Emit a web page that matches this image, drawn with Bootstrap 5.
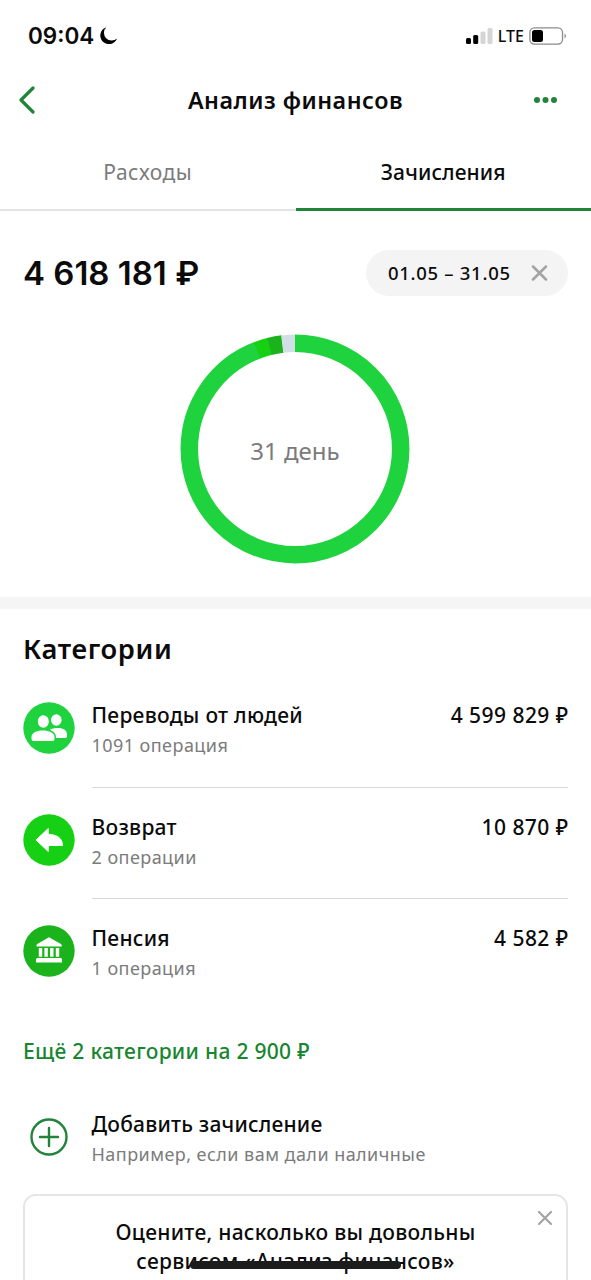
<!DOCTYPE html>
<html lang="ru">
<head>
<meta charset="utf-8">
<meta name="viewport" content="width=device-width, initial-scale=1">
<title>Анализ финансов</title>
<link href="https://cdn.jsdelivr.net/npm/bootstrap@5.3.0/dist/css/bootstrap.min.css" rel="stylesheet">
<style>
body{font-family:"Noto Sans","Open Sans",sans-serif;color:#0b0b0b;background:#fff;height:1280px;overflow:hidden;font-weight:500}
.green{color:#17862f}
.grey{color:#7b7b7b;font-weight:400}
.status{height:71px;padding:1px 24px 0 28px}
.clock{font:600 22.5px/1 Inter,sans-serif}
.lte{font-size:16px;margin:0 5px}
.topbar{height:58px;padding:0 33px 0 18px}
.side{width:60px}
.side-end{width:45px}
.heading{font-size:23.3px;font-weight:600;line-height:32px;letter-spacing:.5px}
.tabs{height:82px}
.tab-item{border-bottom:2px solid #e4e4e4;font-size:21px;line-height:30px;padding-top:28px;letter-spacing:.1px}
.tab-item.grey{letter-spacing:.5px}
.tab-item.current{border-bottom:3px solid #21843a}
.summary{height:122px;padding:39px 23px 0}
.total{font:600 33px/46px Inter,sans-serif}
.period{width:202px;height:46px;background:#f4f4f4;padding:0 20px 0 22px;font-size:18.5px;letter-spacing:.7px}
.ring{height:264px;padding:.5px 1px 0 0}
.days{font-size:24px;fill:#7b7b7b;font-weight:400}
.band{height:12px;background:#f5f5f5}
.section-title{font:600 27.3px/36px "Noto Sans",sans-serif;letter-spacing:.6px;height:67px;padding:22px 23px 0}
.entry{height:111.5px;padding:0 23px 0 22.5px}
.entry-text{margin-left:17px;border-bottom:1px solid #d9d9d9;padding-top:24px}
.entry:last-child .entry-text{border-color:transparent}
.name{font-size:21px;line-height:30px;letter-spacing:.27px}
.sum{letter-spacing:.45px;margin-right:-.5px}
.note{font-size:18px;line-height:30px;letter-spacing:.45px}
.icon{margin-top:26px}
.more{height:74px;padding:25px 23px 0;font-size:21px;line-height:30px;letter-spacing:.3px}
.add{height:109px}
.add .name{letter-spacing:.2px}
.survey{height:110px;margin:0 23px;border:2px solid #e5e5e5;border-radius:13px;font-size:21px;line-height:29.500px;padding-top:22px;letter-spacing:.28px}
.close-x{right:13px;top:14px}
.home-bar{left:190px;top:1260.500px;width:211px;height:8px;border-radius:4px;background:#1c1c1c}
</style>
</head>
<body class="position-relative">
<header>
  <div class="status d-flex align-items-center justify-content-between">
    <div class="d-flex align-items-center">
      <span class="clock">09:04</span>
      <svg class="ms-1" width="20" height="20" viewBox="0 0 20 20"><path d="M8.300 1.300A8.600 8.600 0 1 0 19 12.400 7.500 7.500 0 0 1 8.300 1.300Z"/></svg>
    </div>
    <div class="d-flex align-items-center">
      <svg width="27" height="18" viewBox="0 0 27 18"><rect x="0" y="11" width="5" height="6" rx="1.500"/><rect x="7.200" y="8" width="5" height="9" rx="1.500"/><g fill="#d5d5d5"><rect x="14.500" y="4.500" width="5" height="12.500" rx="1.500"/><rect x="21.500" y="1" width="5" height="16" rx="1.500"/></g></svg>
      <span class="lte">LTE</span>
      <svg width="38" height="18" viewBox="0 0 38 18"><rect x=".9" y=".9" width="32.600" height="16.200" rx="4.500" fill="#fff" stroke="#8b8b8b" stroke-width="1.300"/><rect x="3" y="3" width="11" height="12" rx="2.500"/><path d="M35.500 6.500q3 2.500 0 5Z" fill="#8b8b8b"/></svg>
    </div>
  </div>
  <div class="topbar d-flex align-items-center justify-content-between">
    <div class="side"><svg class="d-block" width="18" height="28" viewBox="0 0 18 28" fill="none" stroke="#21843a" stroke-width="3.200" stroke-linecap="round" stroke-linejoin="round"><path d="M15 2 3 14 15 26"/></svg></div>
    <span class="heading">Анализ финансов</span>
    <div class="side-end d-flex justify-content-end"><svg width="25" height="8" viewBox="0 0 25 8" fill="#21843a"><circle cx="4" cy="4" r="3"/><circle cx="12.500" cy="4" r="3"/><circle cx="21" cy="4" r="3"/></svg></div>
  </div>
  <nav class="tabs row g-0 text-center">
    <div class="col tab-item grey">Расходы</div>
    <div class="col tab-item current">Зачисления</div>
  </nav>
</header>
<main>
  <div class="summary d-flex justify-content-between align-items-start">
    <span class="total">4 618 181 ₽</span>
    <div class="period rounded-pill d-flex align-items-center justify-content-between">
      <span>01.05 – 31.05</span>
      <svg width="17" height="17" viewBox="0 0 17 17" stroke="#a3a3a3" stroke-width="2.500" stroke-linecap="round"><path d="m2 1.500 13 13M15 1.500 2 14.500"/></svg>
    </div>
  </div>
  <div class="ring d-flex justify-content-center">
    <svg width="230" height="230" viewBox="-115 -115 230 230">
      <g fill="none" stroke-width="17.500" transform="rotate(-90)">
        <circle r="105.700" stroke="#1fd33f" pathLength="360" stroke-dasharray="339.500 20.500"/>
        <circle r="105.700" stroke="#16d113" pathLength="360" stroke-dasharray="7.300 352.700" stroke-dashoffset="21"/>
        <circle r="105.700" stroke="#1bb31c" pathLength="360" stroke-dasharray="7.200 352.800" stroke-dashoffset="14"/>
        <circle r="105.700" stroke="#d3dfe7" pathLength="360" stroke-dasharray="7 353" stroke-dashoffset="7"/>
      </g>
      <text class="days" y="11" text-anchor="middle">31 день</text>
    </svg>
  </div>
  <div class="band"></div>
  <h2 class="section-title mb-0">Категории</h2>
  <section>
    <div class="entry d-flex">
      <svg class="icon" width="52" height="52" viewBox="0 0 52 52"><circle cx="26" cy="26" r="25.700" fill="#1fd33f"/><g fill="#fff"><ellipse cx="33.300" cy="18" rx="5.300" ry="5.800"/><path d="M27 27.500c10-3.500 17-.5 17 5v2q0 1.500-2 1.500H30Z"/><path d="M7 37v-2c0-5 5-8.500 12.500-8.500S33 30 33 35v2q0 4-3 4H10q-3 0-3-4Z" fill="#1fd33f"/><ellipse cx="20.300" cy="19.500" rx="7" ry="7.500" fill="#1fd33f"/><ellipse cx="20.300" cy="19.500" rx="5.500" ry="6.200"/><path d="M8.500 37v-2c0-4 4.500-6.500 11.200-6.500S31.500 31 31.500 35v2q0 2-2 2h-19q-2 0-2-2Z"/></g></svg>
      <div class="entry-text flex-grow-1 d-flex justify-content-between">
        <div><div class="name">Переводы от людей</div><div class="note grey">1091 операция</div></div>
        <div class="name sum">4 599 829 ₽</div>
      </div>
    </div>
    <div class="entry d-flex">
      <svg class="icon" width="52" height="52" viewBox="0 0 52 52"><circle cx="26" cy="26" r="25.700" fill="#16d113"/><path d="M13 26 25.300 14.500V20.500c8.500 0 14.200 3.500 14.200 11H25.300V37.500Z" fill="#fff" stroke="#fff" stroke-linejoin="round"/></svg>
      <div class="entry-text flex-grow-1 d-flex justify-content-between">
        <div><div class="name">Возврат</div><div class="note grey">2 операции</div></div>
        <div class="name sum">10 870 ₽</div>
      </div>
    </div>
    <div class="entry d-flex">
      <svg class="icon" width="52" height="52" viewBox="0 0 52 52"><circle cx="26" cy="26" r="25.700" fill="#1bb31c"/><path d="M26 12.300 38 19q.8.500.8 1.500v1H13.500v-1q0-1 .8-1.500ZM15.800 23h3.400v8.800h-3.400Zm5.600 0h3.400v8.800h-3.400Zm5.700 0h3.400v8.800h-3.400Zm5.700 0h3.400v8.800h-3.400ZM13 34.500q0-1.500 1.500-1.500h23q1.500 0 1.500 1.500v3H13Z" fill="#fff"/></svg>
      <div class="entry-text flex-grow-1 d-flex justify-content-between">
        <div><div class="name">Пенсия</div><div class="note grey">1 операция</div></div>
        <div class="name sum">4 582 ₽</div>
      </div>
    </div>
  </section>
  <div class="more green">Ещё 2 категории на 2 900 ₽</div>
  <div class="entry add d-flex">
    <svg class="icon" width="52" height="52" viewBox="0 0 52 52" fill="none" stroke="#21843a" stroke-width="2.400" stroke-linecap="round"><circle cx="26" cy="26" r="17.500"/><path d="M26 17v18M17 26h18"/></svg>
    <div class="entry-text flex-grow-1 border-0"><div class="name">Добавить зачисление</div><div class="note grey">Например, если вам дали наличные</div></div>
  </div>
  <div class="survey position-relative text-center">
    Оцените, насколько вы довольны<br>сервисом «Анализ финансов»
    <svg class="close-x position-absolute" width="16" height="16" viewBox="0 0 16 16" stroke="#a3a3a3" stroke-width="2.200" stroke-linecap="round"><path d="m2 2 12 12M14 2 2 14"/></svg>
  </div>
</main>
<div class="home-bar position-absolute"></div>
<script src="https://cdn.jsdelivr.net/npm/bootstrap@5.3.0/dist/js/bootstrap.bundle.min.js"></script>
</body>
</html>
